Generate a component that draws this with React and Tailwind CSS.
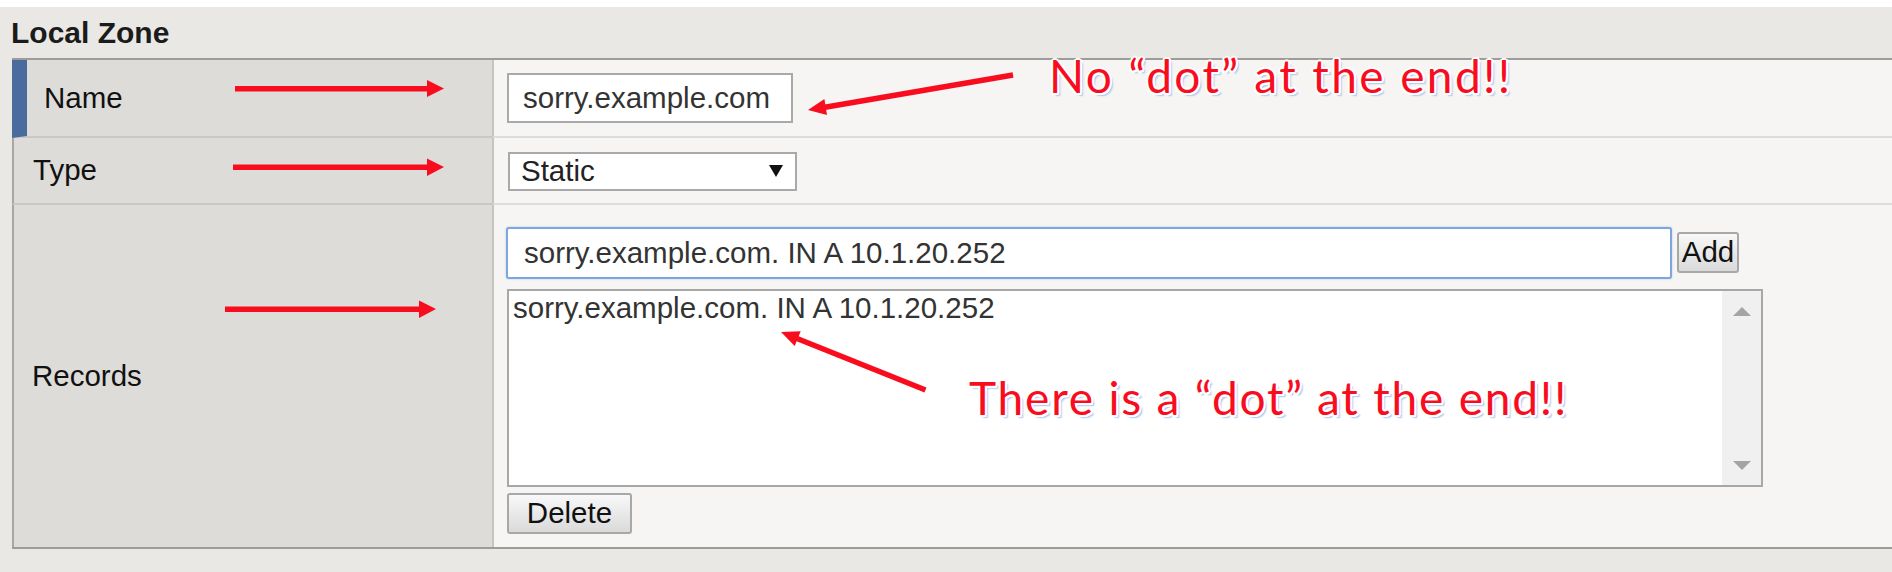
export default function App() {
  return (
    <div className="relative w-[1892px] h-[572px] overflow-hidden bg-[#e9e8e4] font-['Liberation_Sans',Arial,sans-serif] text-[29.5px] text-[#111]">
      <div className="h-[7px] bg-white" />
      <div className="h-[51px] flex items-center pl-[11px] font-bold text-[30px] text-[#1b1b1b]">Local Zone</div>
      <div className="ml-[12px] border-t-2 border-b-2 border-[#9c9c9a]">
        {/* Name row */}
        <div className="flex h-[78px]">
          <div className="w-[480px] shrink-0 bg-[#dedcd9] border-l-[15px] border-l-[#4a6b9d] border-b-2 border-b-[#c9c8c4] flex items-center pl-[17px]">Name</div>
          <div className="flex-1 bg-[#f6f5f3] border-l-2 border-l-[#c5c4c1] border-b-2 border-b-[#dddcd9] flex items-center pl-[13px]">
            <div className="w-[286px] h-[50px] bg-white border-2 border-[#a9a9a9] flex items-center pl-[14px] text-[#333]">sorry.example.com</div>
          </div>
        </div>
        {/* Type row */}
        <div className="flex h-[67px]">
          <div className="w-[480px] shrink-0 bg-[#dedcd9] border-l-2 border-l-[#a7a7a5] border-b-2 border-b-[#c9c8c4] flex items-center pl-[19px]">Type</div>
          <div className="flex-1 bg-[#f6f5f3] border-l-2 border-l-[#c5c4c1] border-b-2 border-b-[#dddcd9] flex items-center pl-[14px] pt-[1px]">
            <div className="w-[289px] h-[39px] bg-white border-2 border-[#a9a9a9] flex items-center justify-between pl-[11px] pr-[12px] text-[#222]">
              <span>Static</span>
              <svg width="14" height="12" viewBox="0 0 14 12"><polygon points="0,0 14,0 7,12" fill="#111" /></svg>
            </div>
          </div>
        </div>
        {/* Records row */}
        <div className="flex h-[342px]">
          <div className="w-[480px] shrink-0 bg-[#dedcd9] border-l-2 border-l-[#a7a7a5] flex items-center pl-[18px]">Records</div>
          <div className="flex-1 bg-[#f6f5f3] border-l-2 border-l-[#c5c4c1] pl-[12px] pt-[22px] flex flex-col">
            <div className="flex items-start">
              <div className="w-[1166px] h-[52px] bg-white border-2 border-[#7ea5dc] rounded-[3px] shadow-[0_0_2px_#a9c4ea] flex items-center pl-[16px] text-[#333]">sorry.example.com. IN A 10.1.20.252</div>
              <div className="ml-[5px] mt-[5px] w-[62px] h-[41px] border-2 border-[#a8a8a8] rounded-[3px] bg-linear-to-b from-[#f8f8f8] to-[#dadada] flex items-center justify-center text-[#111]">Add</div>
            </div>
            <div className="ml-[1px] mt-[10px] w-[1256px] h-[198px] bg-white border-2 border-[#a7a7a7] flex">
              <div className="flex-1 pl-[4px] leading-[33px] text-[#333]">sorry.example.com. IN A 10.1.20.252</div>
              <div className="w-[39px] bg-[#f0f0f0] flex flex-col items-center justify-between pt-[16px] pb-[15px]">
                <svg width="18" height="9" viewBox="0 0 18 9"><polygon points="9,0 18,9 0,9" fill="#a4a4a4" /></svg>
                <svg width="18" height="9" viewBox="0 0 18 9"><polygon points="0,0 18,0 9,9" fill="#a4a4a4" /></svg>
              </div>
            </div>
            <div className="ml-[1px] mt-[6px] w-[125px] h-[41px] border-2 border-[#a8a8a8] rounded-[3px] bg-linear-to-b from-[#f8f8f8] to-[#dadada] flex items-center justify-center text-[#111]">Delete</div>
          </div>
        </div>
      </div>

      {/* annotation arrows */}
      <svg className="absolute left-0 top-0 pointer-events-none" width="1892" height="572" viewBox="0 0 1892 572">
        <g fill="#f80d1f" stroke="none">
          <rect x="235" y="86" width="193" height="5.5" />
          <polygon points="427,80 444,88.5 427,97" />
          <rect x="233" y="164.5" width="195" height="5.5" />
          <polygon points="427,158.5 444,167 427,176" />
          <rect x="225" y="306.5" width="195" height="5.5" />
          <polygon points="419,300.5 436,309 419,318" />
          <polygon points="824.4,99.1 808,110 827,114.9" />
          <polygon points="800.7,331.3 781,332 794.7,346.1" />
        </g>
        <g stroke="#f80d1f" strokeWidth="5.5" fill="none">
          <line x1="1013" y1="75" x2="825" y2="107.2" />
          <line x1="925.5" y1="390" x2="797" y2="338.5" />
        </g>
      </svg>

      <span className="absolute left-[1049px] top-[53px] whitespace-nowrap font-['Lato',sans-serif] text-[46px] tracking-[2.4px] leading-none text-[#f80d1f] [text-shadow:-1.5px_-1.5px_0_#fff,1.5px_-1.5px_0_#fff,-1.5px_1.5px_0_#fff,1.5px_1.5px_0_#fff,0_2px_0_#fff,2px_0_0_#fff,0_-2px_0_#fff,-2px_0_0_#fff,3px_3px_1.5px_#a9c9ea]">No “dot” at the end!!</span>
      <span className="absolute left-[969px] top-[375px] whitespace-nowrap font-['Lato',sans-serif] text-[46px] tracking-[1.8px] leading-none text-[#f80d1f] [text-shadow:-1.5px_-1.5px_0_#fff,1.5px_-1.5px_0_#fff,-1.5px_1.5px_0_#fff,1.5px_1.5px_0_#fff,0_2px_0_#fff,2px_0_0_#fff,0_-2px_0_#fff,-2px_0_0_#fff,3px_3px_1.5px_#a9c9ea]">There is a “dot” at the end!!</span>
    </div>
  );
}
